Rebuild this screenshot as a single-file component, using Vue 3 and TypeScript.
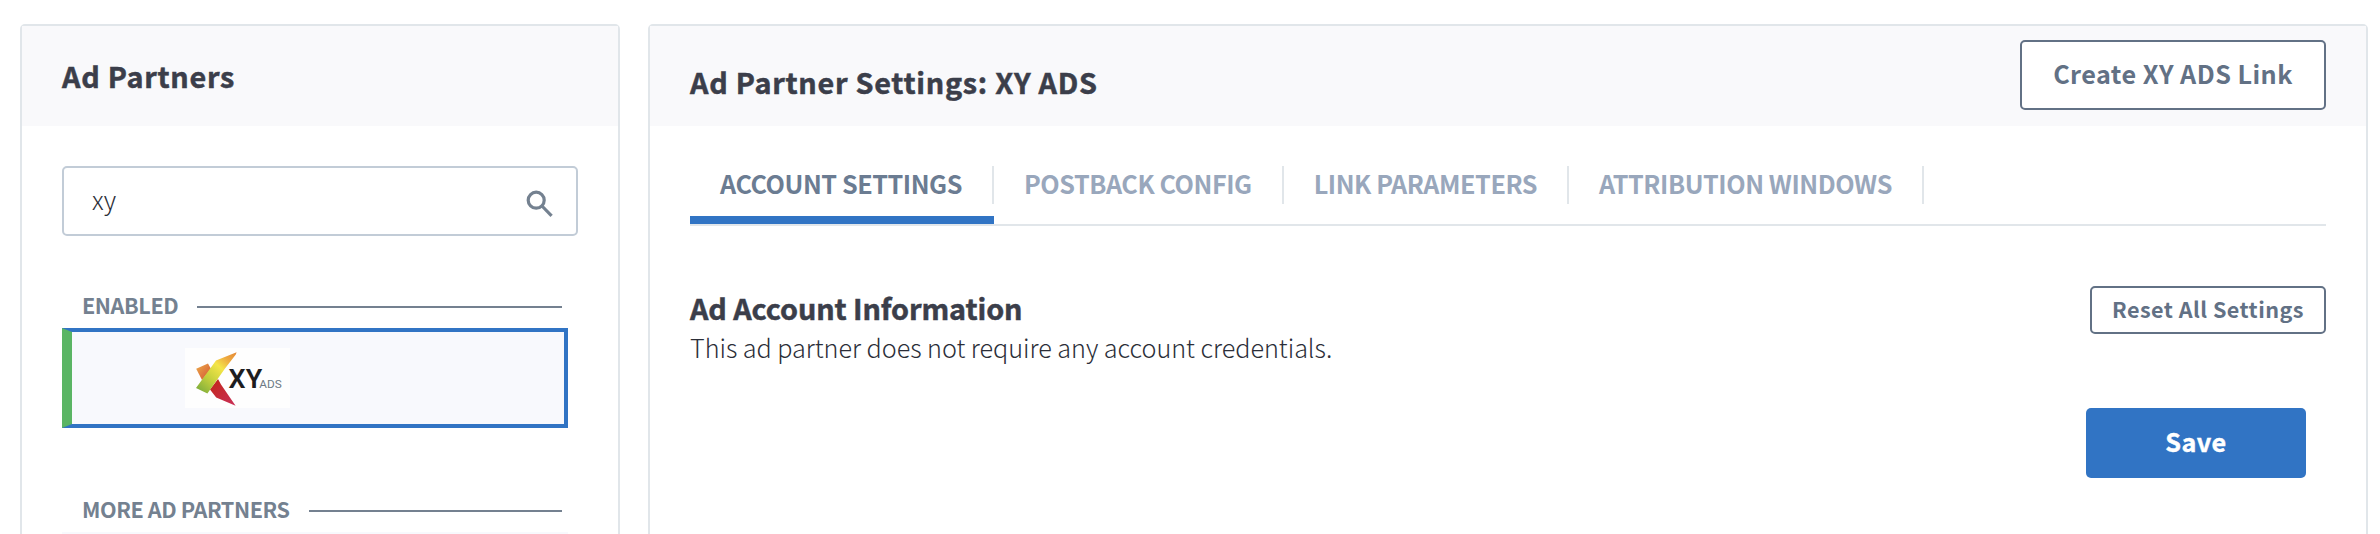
<script setup lang="ts">
import { ref } from 'vue'

const query = ref('xy')
const partner = 'XY ADS'
const tabs: string[] = ['ACCOUNT SETTINGS', 'POSTBACK CONFIG', 'LINK PARAMETERS', 'ATTRIBUTION WINDOWS']
const activeTab = ref(0)
</script>

<template>
  <main class="page">
    <aside class="card sidebar">
      <header class="card-header">
        <h1 class="title">Ad Partners</h1>
      </header>
      <div class="card-body">
        <label class="search">
          <input v-model="query" class="search-input" type="text" aria-label="Search partners" />
          <svg class="search-icon" width="30" height="30" viewBox="0 0 30 30">
            <circle cx="11.2" cy="11.2" r="8" />
            <path d="M17 17L26.6 26.8" />
          </svg>
        </label>

        <div class="group-label"><span>ENABLED</span><i class="rule"></i></div>
        <div class="partner selected">
          <svg class="logo" width="105" height="60" viewBox="0 0 105 60" role="img">
            <defs>
              <linearGradient id="ribbon" x1="15" y1="44" x2="50" y2="4" gradientUnits="userSpaceOnUse">
                <stop offset="0" stop-color="#7fae3c" />
                <stop offset="0.3" stop-color="#c3cf3c" />
                <stop offset="0.6" stop-color="#f4e548" />
                <stop offset="0.8" stop-color="#eeaa40" />
                <stop offset="1" stop-color="#e58a36" />
              </linearGradient>
              <linearGradient id="ember" x1="13" y1="18" x2="23" y2="27" gradientUnits="userSpaceOnUse">
                <stop offset="0" stop-color="#e9a046" />
                <stop offset="1" stop-color="#d9683a" />
              </linearGradient>
              <linearGradient id="crimson" x1="28" y1="34" x2="50" y2="57" gradientUnits="userSpaceOnUse">
                <stop offset="0" stop-color="#c3271f" />
                <stop offset="1" stop-color="#c93058" />
              </linearGradient>
            </defs>
            <rect width="105" height="60" fill="#fefefe" />
            <path d="M11.2 20.8L23 15.6L26 21L17 32Z" fill="url(#ember)" />
            <path d="M33 31L36 36.5L50.6 57.8L31.2 49.6L25 41.5Z" fill="url(#crimson)" />
            <path d="M51.6 4.2L31 12.4L11 40L22.4 45.6L40 20.5L50.8 6.4Z" fill="url(#ribbon)" />
            <text class="logo-name" x="43.6" y="40" textLength="33.6" lengthAdjust="spacingAndGlyphs">XY</text>
            <text class="logo-sub" x="74.3" y="40" textLength="22.4" lengthAdjust="spacingAndGlyphs">ADS</text>
          </svg>
        </div>

        <div class="group-label more"><span>MORE AD PARTNERS</span><i class="rule"></i></div>
        <div class="partner"></div>
      </div>
    </aside>

    <section class="card settings">
      <header class="card-header">
        <h1 class="title settings-title">Ad Partner Settings: {{ partner }}</h1>
        <button class="btn outline create">Create {{ partner }} Link</button>
      </header>
      <div class="card-body">
        <nav class="tabs">
          <a
            v-for="(tab, index) in tabs"
            :key="tab"
            class="tab"
            :class="{ active: index === activeTab }"
            @click="activeTab = index"
          ><span class="tab-label">{{ tab }}</span></a>
        </nav>
        <div class="account">
          <div>
            <h2 class="subtitle">Ad Account Information</h2>
            <p class="note">This ad partner does not require any account credentials.</p>
          </div>
          <button class="btn outline reset">Reset All Settings</button>
        </div>
        <div class="actions">
          <button class="btn save">Save</button>
        </div>
      </div>
    </section>
  </main>
</template>

<style>
body {
  background: #fff;
  overflow: hidden;
}
</style>

<style scoped>
.page {
  box-sizing: border-box;
  display: flex;
  gap: 28px;
  height: 534px;
  padding: 24px 12px 0 20px;
  overflow: hidden;
  color: #3b3e4a;
  font-family: "Noto Sans CJK SC", "Noto Sans", sans-serif;
}

.page * {
  box-sizing: border-box;
}

.card {
  height: 640px;
  border: 2px solid #e1e6ea;
  border-radius: 5px;
  background: #fff;
}

.sidebar {
  flex: 0 0 600px;
}

.settings {
  flex: 1;
}

.card-header {
  display: flex;
  align-items: center;
  justify-content: space-between;
  height: 100px;
  padding: 0 40px;
  background: #f9f9fb;
}

.title,
.subtitle,
.note {
  margin: 0;
}

.title {
  font-size: 28.8px;
  font-weight: 700;
  line-height: 42px;
  letter-spacing: 0.72px;
  -webkit-text-stroke: 0.5px currentColor;
}

.settings-title {
  padding-top: 12px;
}

.card-body {
  padding: 40px 40px 0;
}

.search {
  display: flex;
  align-items: center;
  width: 516px;
  height: 70px;
  padding: 0 20px 0 28px;
  border: 2px solid #c2ccd7;
  border-radius: 5px;
}

.search-input {
  flex: 1;
  min-width: 0;
  padding: 0 0 4px;
  border: 0;
  outline: 0;
  background: transparent;
  color: #2b2e38;
  font: 300 25.2px/38px "Noto Sans CJK SC", "Noto Sans", sans-serif;
}

.search-icon {
  margin: 6px 1px 0 0;
  fill: none;
  stroke: #748190;
  stroke-width: 3.2;
}

.group-label {
  display: flex;
  align-items: center;
  gap: 19px;
  height: 36px;
  margin: 51px 16px 5px 0;
  padding-left: 20px;
  color: #748190;
  font-size: 21.6px;
  font-weight: 700;
  line-height: 36px;
  letter-spacing: -0.42px;
}

.group-label.more {
  margin-top: 63px;
}

.rule {
  flex: 1;
  height: 2px;
  margin-top: 4px;
  background: #748190;
}

.partner {
  width: 506px;
  height: 100px;
  background: #f8f9fd;
}

.partner.selected {
  padding: 16px 0 0 112.5px;
  border: 4px solid #3174c4;
  border-left: 10px solid #5ab564;
}

.logo {
  display: block;
}

.logo-name {
  fill: #1d1d1f;
  font: 600 26px Roboto, sans-serif;
}

.logo-sub {
  fill: #6d7a84;
  font: 400 11px Roboto, sans-serif;
}

.btn {
  display: flex;
  align-items: center;
  justify-content: center;
  padding: 0 0 4px;
  border: 0;
  border-radius: 5px;
  font-family: inherit;
  font-size: 25.2px;
  font-weight: 700;
  letter-spacing: 0.45px;
  white-space: nowrap;
}

.outline {
  border: 2px solid #627185;
  background: #fff;
  color: #627185;
}

.create {
  align-self: flex-start;
  width: 306px;
  height: 70px;
  margin-top: 14px;
}

.reset {
  width: 236px;
  height: 48px;
  padding-bottom: 3px;
  font-size: 21.6px;
}

.save {
  width: 220px;
  height: 70px;
  background: #3174c4;
  color: #fff;
  -webkit-text-stroke: 0.4px currentColor;
}

.tabs {
  display: flex;
  height: 60px;
  border-bottom: 2px solid #e1e6ea;
}

.tab {
  height: 58px;
  border-bottom: 8px solid transparent;
  color: #99a7bc;
  cursor: pointer;
}

.tab.active {
  border-bottom-color: #3174c4;
  color: #6b7c92;
}

.tab-label {
  display: block;
  height: 38px;
  padding: 0 30px;
  border-right: 2px solid #e1e6ea;
  font-size: 25.2px;
  font-weight: 700;
  line-height: 34px;
  letter-spacing: -0.45px;
}

.account {
  display: flex;
  align-items: flex-start;
  justify-content: space-between;
  margin-top: 60px;
}

.subtitle {
  padding-top: 1px;
  font-size: 28.8px;
  font-weight: 700;
  line-height: 41px;
  letter-spacing: -0.1px;
  -webkit-text-stroke: 0.5px currentColor;
}

.note {
  color: #2b2e38;
  font-size: 25.2px;
  font-weight: 300;
  line-height: 38px;
  letter-spacing: -0.035px;
}

.actions {
  display: flex;
  justify-content: flex-end;
  margin-top: 42px;
  padding-right: 20px;
}
</style>
